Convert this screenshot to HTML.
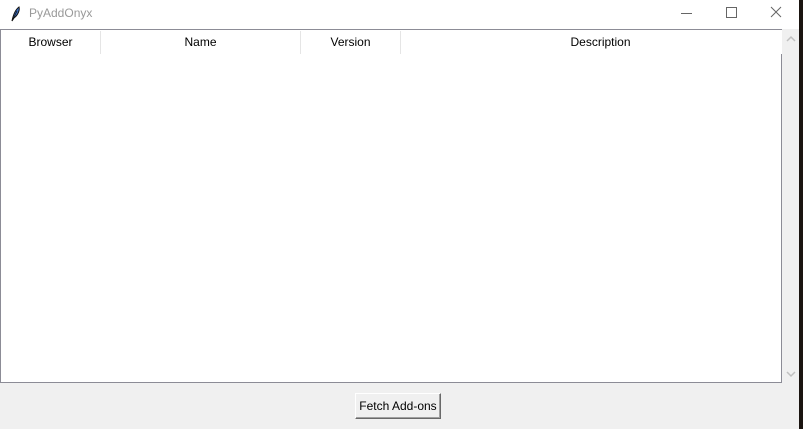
<!DOCTYPE html>
<html><head><style>
body{margin:0;width:803px;height:429px;background:#1a1410;position:relative;overflow:hidden;font-family:"Liberation Sans",Arial,sans-serif;}
.win{position:absolute;left:0;top:0;width:799px;height:429px;background:#f0f0f0;}
.title{position:absolute;left:0;top:0;width:799px;height:29px;background:#fff;}
.title .t{position:absolute;left:29px;top:6px;font-size:12px;color:#999;}
.tree{position:absolute;left:0;top:29px;width:781px;height:352px;background:#fff;border:1px solid #8c8c96;border-right:none;}
.rline{position:absolute;left:781px;top:54px;width:1px;height:328px;background:#8c8c96;}
.h{position:absolute;top:1px;height:23px;font-size:12px;line-height:23px;text-align:center;color:#000;border-right:1px solid #e5e5e5;}
.sb{position:absolute;left:783px;top:29px;width:16px;height:353px;background:#f0f0f0;}
.btn{position:absolute;left:355px;top:393px;width:86px;height:26px;box-sizing:border-box;background:#f0f0f0;border:1px solid;border-color:#fff #696969 #696969 #fff;box-shadow:inset -1px -1px #a0a0a0;font-size:12px;line-height:25px;text-align:center;}
</style></head><body>
<div class="win">
<div class="title">
<svg style="position:absolute;left:9px;top:6px" width="12" height="16" viewBox="0 0 12 16"><path d="M3 15 C4 10 6 4 10 1 C11 4 9 9 5 12 Z" fill="#3a6fc4" stroke="#111" stroke-width="1"/><path d="M3 15 L8 5" stroke="#111" stroke-width="0.8"/></svg>
<span class="t">PyAddOnyx</span>
<div style="position:absolute;left:681px;top:13px;width:11px;height:1px;background:#666"></div>
<div style="position:absolute;left:726px;top:7px;width:9px;height:9px;border:1px solid #666"></div>
<svg style="position:absolute;left:770px;top:6px" width="12" height="12"><path d="M1 1L11 11M11 1L1 11" stroke="#666" stroke-width="1"/></svg>
</div>
<div class="tree">
<div class="h" style="left:0;width:99px">Browser</div>
<div class="h" style="left:100px;width:199px">Name</div>
<div class="h" style="left:300px;width:99px">Version</div>
<div class="h" style="left:400px;width:399px;border:none">Description</div>
</div>
<div class="rline"></div>
<div class="sb">
<svg style="position:absolute;left:3px;top:6px" width="10" height="8"><path d="M1 6L5 2L9 6" stroke="#c0c0c0" stroke-width="1.5" fill="none"/></svg>
<svg style="position:absolute;left:3px;top:341px" width="10" height="8"><path d="M1 2L5 6L9 2" stroke="#c0c0c0" stroke-width="1.5" fill="none"/></svg>
</div>
<div class="btn">Fetch Add-ons</div>
</div>
</body></html>
